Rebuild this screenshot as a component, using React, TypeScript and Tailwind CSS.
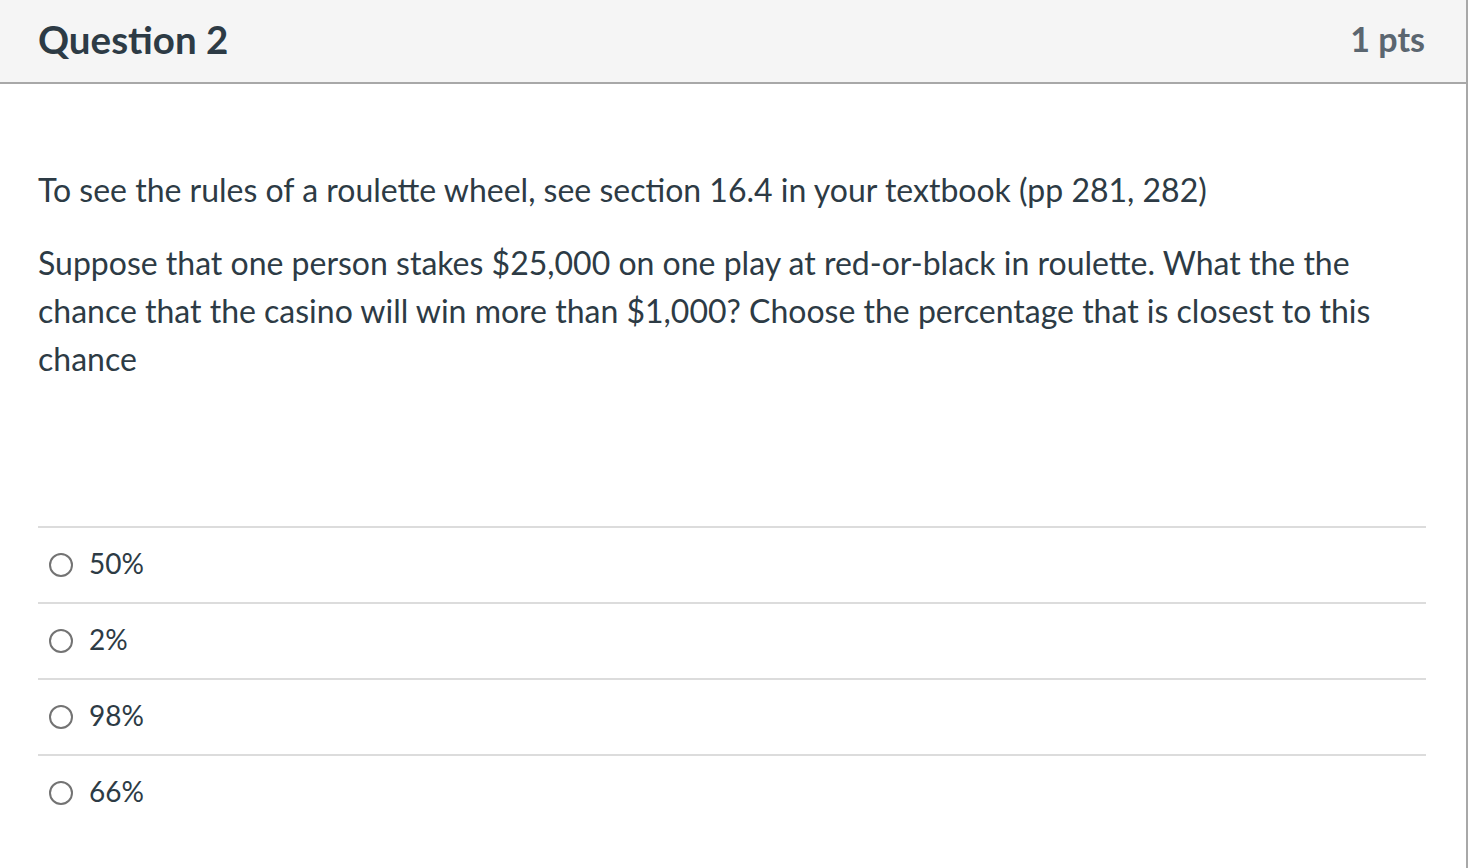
import React from "react";

const options = ["50%", "2%", "98%", "66%"];

export default function App() {
  return (
    <div
      className="w-[1468px] min-h-[868px] bg-white border-r-2 border-[#a8a8a8] text-[#2d3b45]"
      style={{ fontFamily: "Lato, 'Noto Sans', sans-serif" }}
    >
      <div className="h-[84px] bg-[#f5f5f5] border-b-2 border-[#a8a8a8] flex items-center justify-between pl-[38px] pr-[41px]">
        <h2 className="text-[38.5px] font-bold leading-none pb-[4px]">Question 2</h2>
        <div className="text-[34px] font-bold text-[#5b6670] leading-none pb-[4px]">1 pts</div>
      </div>
      <div className="px-[38px] pt-[82px]">
        <p className="text-[32px] leading-[48px]">
          To see the rules of a roulette wheel, see section 16.4 in your textbook (pp 281, 282)
        </p>
        <p className="text-[32px] leading-[48px] mt-[25px] w-[1388px]">
          Suppose that one person stakes $25,000 on one play at red-or-black in roulette. What the the chance that the casino will win more than $1,000? Choose the percentage that is closest to this chance
        </p>
        <div className="mt-[143px] w-[1388px]">
          {options.map((o) => (
            <div key={o} className="h-[76px] flex items-center border-t-2 border-[#dcdcdc]">
              <span className="ml-[11px] w-[24px] h-[24px] rounded-full border-2 border-[#737373] bg-white shrink-0" />
              <span className="ml-[16px] text-[28px] leading-none pb-[4px]">{o}</span>
            </div>
          ))}
        </div>
      </div>
    </div>
  );
}
